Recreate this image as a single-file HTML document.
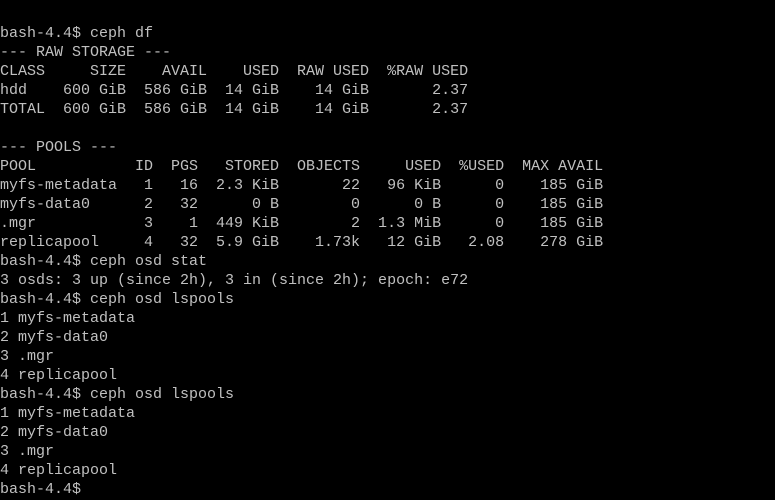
<!DOCTYPE html>
<html><head><meta charset="utf-8"><style>
html,body{margin:0;padding:0;background:#000;width:775px;height:500px;overflow:hidden}
pre{position:absolute;left:0;top:23.5px;margin:0;font-family:"Liberation Mono",monospace;font-size:15px;line-height:19px;color:#c0c0c0;letter-spacing:0}
</style></head><body><pre>bash-4.4$ ceph df
--- RAW STORAGE ---
CLASS     SIZE    AVAIL    USED  RAW USED  %RAW USED
hdd    600 GiB  586 GiB  14 GiB    14 GiB       2.37
TOTAL  600 GiB  586 GiB  14 GiB    14 GiB       2.37

--- POOLS ---
POOL           ID  PGS   STORED  OBJECTS     USED  %USED  MAX AVAIL
myfs-metadata   1   16  2.3 KiB       22   96 KiB      0    185 GiB
myfs-data0      2   32      0 B        0      0 B      0    185 GiB
.mgr            3    1  449 KiB        2  1.3 MiB      0    185 GiB
replicapool     4   32  5.9 GiB    1.73k   12 GiB   2.08    278 GiB
bash-4.4$ ceph osd stat
3 osds: 3 up (since 2h), 3 in (since 2h); epoch: e72
bash-4.4$ ceph osd lspools
1 myfs-metadata
2 myfs-data0
3 .mgr
4 replicapool
bash-4.4$ ceph osd lspools
1 myfs-metadata
2 myfs-data0
3 .mgr
4 replicapool
bash-4.4$</pre></body></html>
